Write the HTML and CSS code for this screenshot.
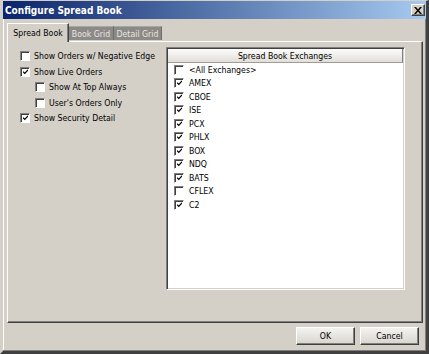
FILE: index.html
```html
<!DOCTYPE html>
<html>
<head>
<meta charset="utf-8">
<link rel="stylesheet" href="styles.css">
</head>
<body>
<div class="window">
  <div class="titlebar">
    <span class="title">Configure Spread Book</span>
    <span class="close"><svg width="8" height="7" viewBox="0 0 8 7"><path d="M0 0h2l2 2.5 2-2.5h2l-3 3.5 3 3.5h-2l-2-2.5-2 2.5h-2l3-3.5z" fill="#000"/></svg></span>
  </div>
  <div class="content">
    <div class="tabs">
      <div class="tab active">Spread Book</div>
      <div class="tab">Book Grid</div>
      <div class="tab">Detail Grid</div>
    </div>
    <div class="panel">
      <div class="options">
        <label class="opt"><span class="cb"></span>Show Orders w/ Negative Edge</label>
        <label class="opt"><span class="cb on"></span>Show Live Orders</label>
        <label class="opt sub"><span class="cb"></span>Show At Top Always</label>
        <label class="opt sub"><span class="cb"></span>User's Orders Only</label>
        <label class="opt"><span class="cb on"></span>Show Security Detail</label>
      </div>
      <div class="listbox">
        <div class="listhead">Spread Book Exchanges</div>
        <div class="items">
          <div class="item"><span class="cb"></span>&lt;All Exchanges&gt;</div>
          <div class="item"><span class="cb on"></span>AMEX</div>
          <div class="item"><span class="cb on"></span>CBOE</div>
          <div class="item"><span class="cb on"></span>ISE</div>
          <div class="item"><span class="cb on"></span>PCX</div>
          <div class="item"><span class="cb on"></span>PHLX</div>
          <div class="item"><span class="cb on"></span>BOX</div>
          <div class="item"><span class="cb on"></span>NDQ</div>
          <div class="item"><span class="cb on"></span>BATS</div>
          <div class="item"><span class="cb"></span>CFLEX</div>
          <div class="item"><span class="cb on"></span>C2</div>
        </div>
      </div>
    </div>
    <div class="buttons">
      <div class="btn">OK</div>
      <div class="btn">Cancel</div>
    </div>
  </div>
</div>
</body>
</html>
```

FILE: styles.css
```css
html, body {
  margin: 0;
  padding: 0;
  background: #d4d0c8;
}
body {
  font-family: "DejaVu Sans", "Liberation Sans", sans-serif;
  font-stretch: condensed;
  font-size: 8.7px;
  color: #000;
}
.window {
  width: 429px;
  height: 354px;
  box-sizing: border-box;
  background: #d4d0c8;
  border-style: solid;
  border-width: 1px 3px 3px 3px;
  border-color: #d4d0c8 #404040 #404040 #d4d0c8;
  box-shadow: inset -1px -1px 0 #808080, inset 1px 0 0 #fff;
  display: flex;
  flex-direction: column;
}
.titlebar {
  height: 18px;
  background: linear-gradient(to right, #0a246a, #a6caf0);
  display: flex;
  align-items: center;
  justify-content: space-between;
  padding: 0 1px 0 2px;
}
.title {
  color: #fff;
  font-weight: bold;
  font-size: 10px;
}
.close {
  width: 14px;
  height: 12px;
  box-sizing: border-box;
  background: #d4d0c8;
  border: 1px solid;
  border-color: #fff #404040 #404040 #fff;
  box-shadow: inset -1px -1px 0 #808080;
  display: flex;
  align-items: center;
  justify-content: center;
}
.close svg { display: block; }
.content {
  flex: 1;
  display: flex;
  flex-direction: column;
  padding: 4px 3px 0 4px;
}
.tabs {
  display: flex;
  align-items: flex-end;
  height: 18px;
  position: relative;
  z-index: 1;
}
.tab {
  height: 14px;
  box-sizing: border-box;
  display: flex;
  align-items: center;
  justify-content: center;
  white-space: nowrap;
  background: #8c8a86;
  color: #e8e6e0;
  border-right: 1px solid #6e6c68;
  border-top: 1px solid #a8a6a2;
  margin-bottom: 1px;
}
.tab.active {
  height: 19px;
  margin-bottom: -1px;
  background: #d4d0c8;
  color: #000;
  border-top: 1px solid #fff;
  border-left: 1px solid #fff;
  border-right: 1px solid #404040;
  box-shadow: inset -1px 0 0 #808080;
  width: 62px;
}
.tab:nth-child(2) { width: 45px; }
.tab:nth-child(3) { width: 48px; }
.panel {
  height: 282px;
  box-sizing: border-box;
  border: 1px solid;
  border-color: #fff #404040 #404040 #fff;
  box-shadow: inset -1px -1px 0 #808080;
  display: flex;
  padding: 5px 17px 0 12px;
}
.options {
  width: 146px;
  padding-top: 1.5px;
}
.opt {
  display: flex;
  align-items: center;
  height: 15.5px;
  white-space: nowrap;
}
.opt.sub { padding-left: 15px; }
.cb {
  width: 10px;
  height: 10px;
  box-sizing: border-box;
  background: #fff;
  border: 1px solid;
  border-color: #808080 #fff #fff #808080;
  box-shadow: inset 1px 1px 0 #404040;
  margin-right: 4px;
  flex: none;
  position: relative;
}
.cb.on::after {
  content: "";
  position: absolute;
  left: 2px;
  top: 1px;
  width: 5px;
  height: 6px;
  background: no-repeat center/100% 100% url("data:image/svg+xml;utf8,<svg xmlns='http://www.w3.org/2000/svg' viewBox='0 0 7 7'><path d='M0 3 L2.5 5.5 L7 0.5' stroke='black' stroke-width='1.8' fill='none'/></svg>");
}
.listbox {
  width: 239px;
  height: 243px;
  box-sizing: border-box;
  background: #fff;
  border: 1px solid;
  border-color: #808080 #fff #fff #808080;
  box-shadow: inset 1px 1px 0 #404040, inset -1px -1px 0 #d4d0c8;
  padding: 1px;
  display: flex;
  flex-direction: column;
}
.listhead {
  height: 14px;
  flex: none;
  box-sizing: border-box;
  background: linear-gradient(#fcfcfb, #e2dfd9);
  border-bottom: 1px solid #a09c94;
  border-right: 1px solid #808080;
  display: flex;
  align-items: center;
  justify-content: center;
}
.items {
  padding: 0 0 0 6px;
}
.item {
  height: 13.5px;
  display: flex;
  align-items: center;
  white-space: nowrap;
}
.item .cb { margin-right: 5px; }
.buttons {
  display: flex;
  justify-content: flex-end;
  gap: 5px;
  padding: 4px 4px 0 0;
}
.btn {
  width: 59px;
  height: 18px;
  box-sizing: border-box;
  background: linear-gradient(#f4f3f0, #d8d5ce);
  border: 1px solid;
  border-color: #fff #404040 #404040 #fff;
  box-shadow: inset -1px -1px 0 #808080;
  display: flex;
  align-items: center;
  justify-content: center;
}
```
